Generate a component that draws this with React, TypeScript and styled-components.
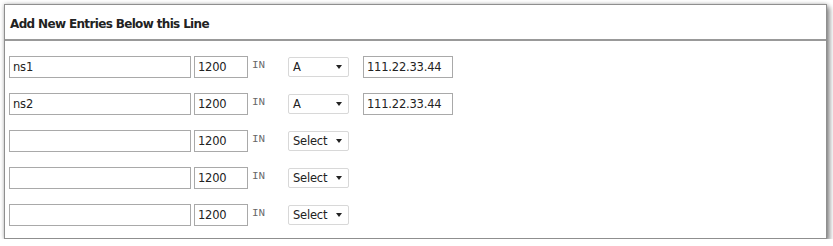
import React from "react";
import styled, { createGlobalStyle } from "styled-components";

const Global = createGlobalStyle`
  html, body { margin: 0; padding: 0; background: #fff; }
  body { font-family: Tahoma, "DejaVu Sans", Verdana, sans-serif; }
`;

const Panel = styled.div`
  margin: 4px 0 0 4px;
  width: 823px;
  height: 235px;
  border: 1px solid #8f8f8f;
  background: #fff;
  box-shadow: 3px 3px 5px rgba(0, 0, 0, 0.4), 0 0 4px rgba(0, 0, 0, 0.25);
  box-sizing: border-box;
`;

const Header = styled.div`
  box-sizing: border-box;
  height: 36px;
  padding: 3px 0 0 5px;
  display: flex;
  align-items: center;
  border-bottom: 2px solid #999;
  font-family: "DejaVu Sans", Verdana, sans-serif;
  font-weight: bold;
  font-size: 12px;
  letter-spacing: -0.65px;
  color: #222;
`;

const Rows = styled.div`
  display: flex;
  flex-direction: column;
  gap: 15px;
  padding: 15px 0 0 4px;
`;

const Row = styled.div`
  display: flex;
  align-items: center;
  height: 22px;
`;

const TextInput = styled.input<{ $w: number; $ml?: number }>`
  box-sizing: border-box;
  width: ${(p) => p.$w}px;
  height: 22px;
  margin-left: ${(p) => p.$ml ?? 0}px;
  border: 1px solid #a9a9a9;
  padding: 1px 3px;
  font-family: "DejaVu Sans", Verdana, sans-serif;
  font-size: 11.5px;
  letter-spacing: -0.2px;
  color: #222;
  background: #fff;
  outline: none;
`;

const ClassLabel = styled.span`
  font-family: "Liberation Mono", "Courier New", monospace;
  font-size: 11px;
  color: #666;
  width: 36px;
  margin-left: 4px;
  align-self: flex-start;
  padding-top: 3px;
`;

const SelectBox = styled.div<{ $w: number }>`
  box-sizing: border-box;
  width: ${(p) => p.$w}px;
  height: 20px;
  border: 1px solid #d8d8d8;
  border-radius: 2px;
  display: flex;
  align-items: center;
  justify-content: space-between;
  padding: 0 6px 0 4px;
  font-family: "DejaVu Sans", Verdana, sans-serif;
  font-size: 11.5px;
  letter-spacing: -0.2px;
  color: #222;
  background: #fff;
`;

const Caret = styled.span`
  width: 0;
  height: 0;
  border-left: 3.5px solid transparent;
  border-right: 3.5px solid transparent;
  border-top: 4px solid #222;
`;

type Entry = { name: string; type: string; addr?: string };

const entries: Entry[] = [
  { name: "ns1", type: "A", addr: "111.22.33.44" },
  { name: "ns2", type: "A", addr: "111.22.33.44" },
  { name: "", type: "Select" },
  { name: "", type: "Select" },
  { name: "", type: "Select" },
];

export default function App() {
  return (
    <>
      <Global />
      <Panel>
        <Header>Add New Entries Below this Line</Header>
        <Rows>
          {entries.map((e, i) => (
            <Row key={i}>
              <TextInput $w={182} defaultValue={e.name} />
              <TextInput $w={54} $ml={3} defaultValue="1200" />
              <ClassLabel>IN</ClassLabel>
              <SelectBox $w={61}>
                <span>{e.type}</span>
                <Caret />
              </SelectBox>
              {e.addr && <TextInput $w={90} $ml={14} defaultValue={e.addr} />}
            </Row>
          ))}
        </Rows>
      </Panel>
    </>
  );
}
